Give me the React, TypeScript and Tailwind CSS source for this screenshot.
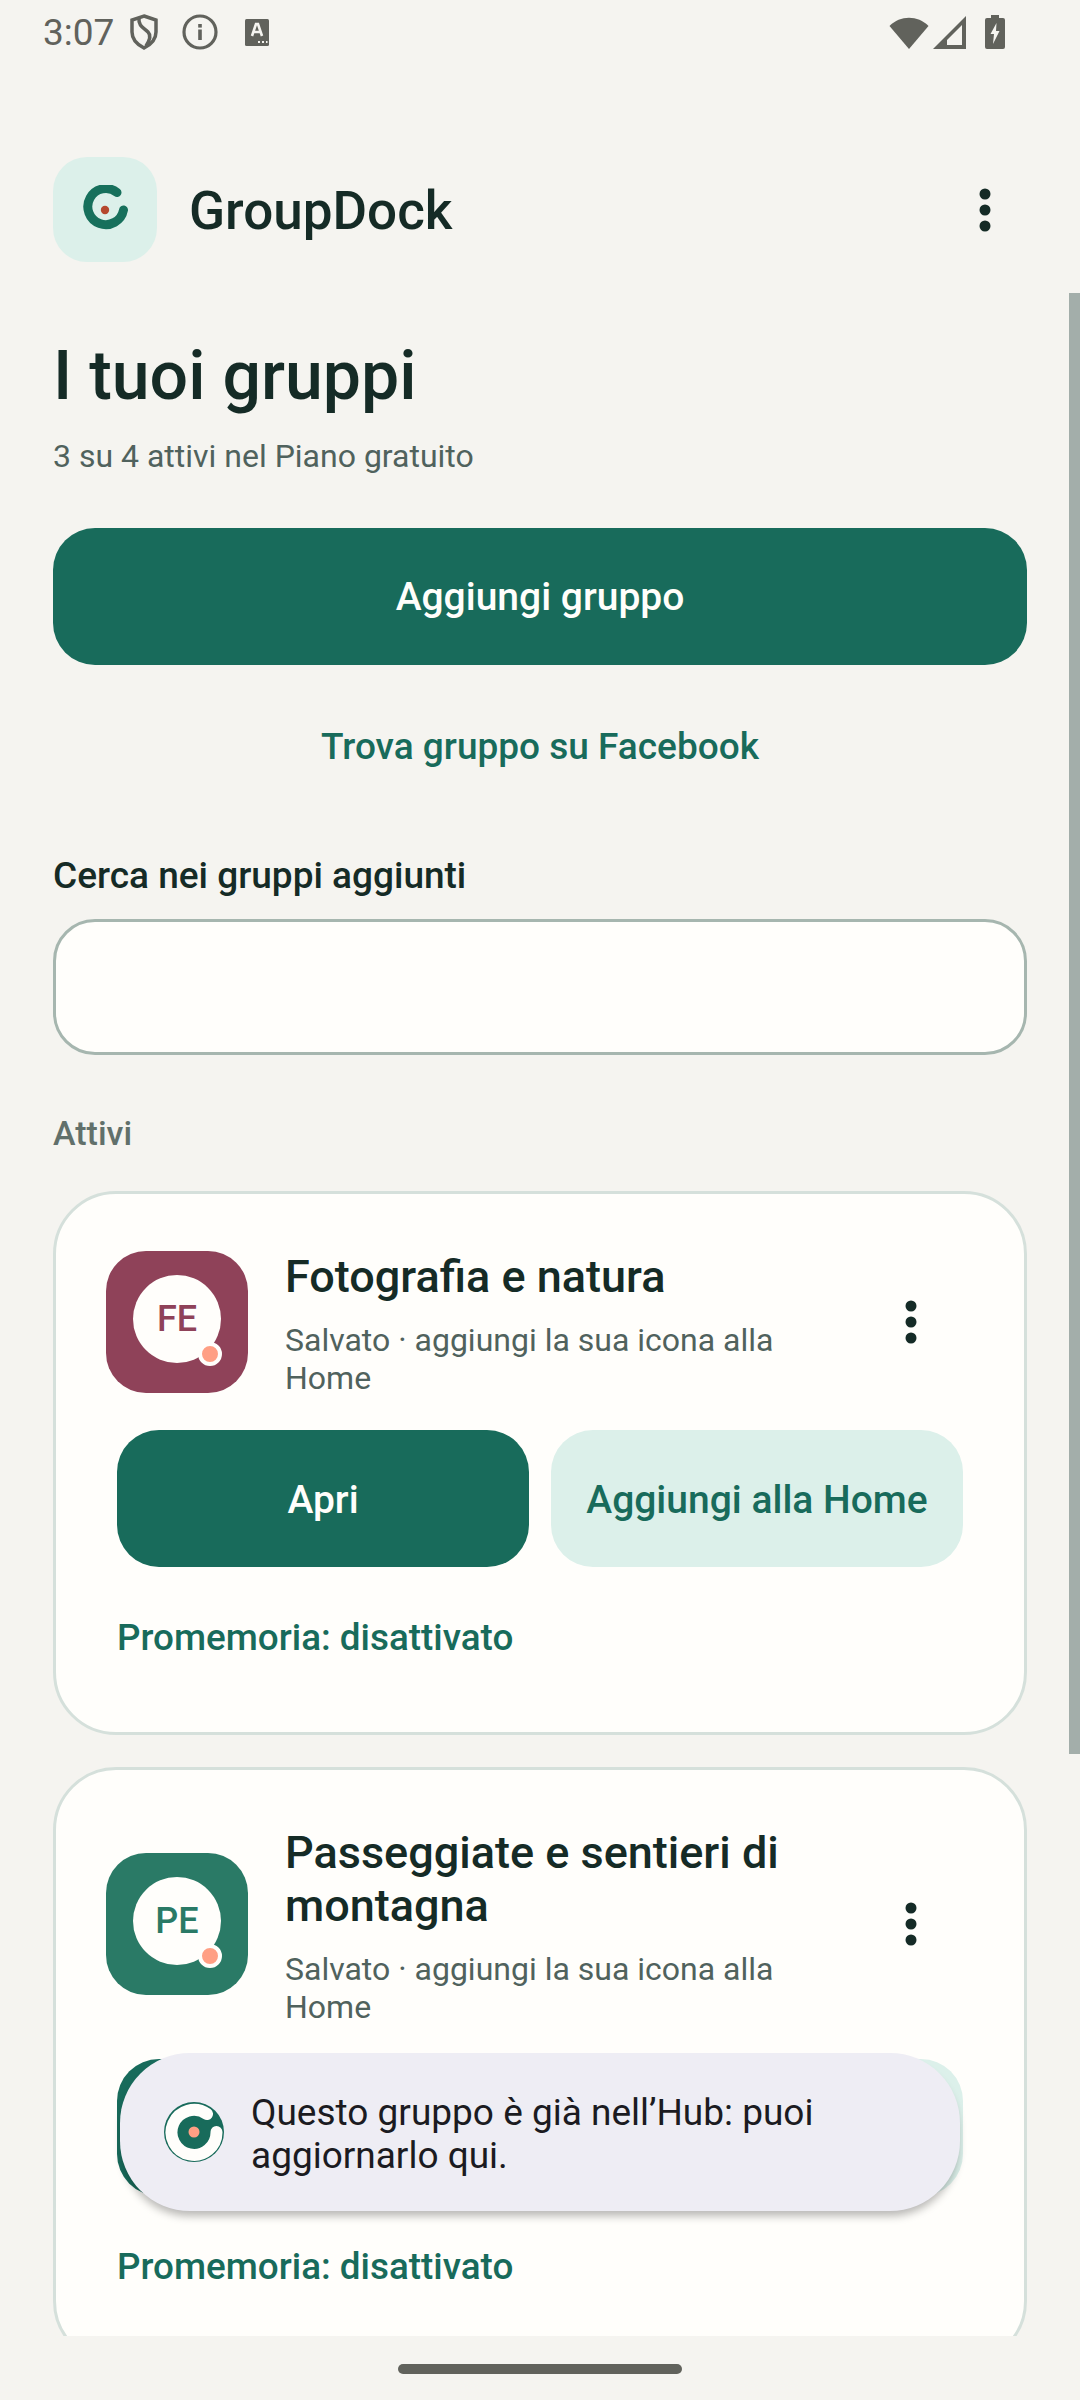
import React from 'react';

const Kebab = () => (
  <svg width="12" height="44" viewBox="0 0 12 44" className="shrink-0">
    <circle cx="6" cy="6" r="5.5" fill="#152b26" />
    <circle cx="6" cy="22" r="5.5" fill="#152b26" />
    <circle cx="6" cy="38" r="5.5" fill="#152b26" />
  </svg>
);

const StatusBar = () => (
  <div className="h-[64px] pl-[43px] pr-[75px] flex items-center justify-between text-[#61625c]">
    <div className="flex items-center">
      <span className="text-[37px] leading-[37px] w-[83px] font-normal">3:07</span>
      <svg width="28" height="36" viewBox="0 0 28 36" fill="none" stroke="#61625c" strokeWidth="3.5" className="ml-[4px]">
        <path d="M14 2 L26 6 V18 C26 26 20 31 14 34 C8 31 2 26 2 18 V6 Z" />
        <path d="M9 4 C8 12 14 14 18 18 C21 21 20 26 16 32" />
      </svg>
      <svg width="36" height="36" viewBox="0 0 36 36" className="ml-[24px]">
        <circle cx="18" cy="18" r="16" fill="none" stroke="#61625c" strokeWidth="3.2" />
        <rect x="16.2" y="15.5" width="3.6" height="10.5" fill="#61625c" />
        <rect x="16.2" y="10" width="3.6" height="3.6" fill="#61625c" />
      </svg>
      <svg width="24" height="27" viewBox="0 0 24 27" className="ml-[27px]">
        <rect width="24" height="27" rx="1.5" fill="#61625c" />
        <path d="M7 17 L11 5 H13 L17 17 M8.5 13 H15.5" fill="none" stroke="#f5f4f0" strokeWidth="2.6" />
        <path d="M13 23 h2 M17 23 h2 M21 23 h1.5" stroke="#f5f4f0" strokeWidth="2" />
      </svg>
    </div>
    <div className="flex items-center">
      <svg width="40" height="33" viewBox="0 0 40 33">
        <path d="M0.5 10 C11 -1 29 -1 39.5 10 L20 33 Z" fill="#61625c" />
      </svg>
      <svg width="33" height="33" viewBox="0 0 33 33" className="ml-[4px]">
        <path fillRule="evenodd" d="M33 0 V33 H0 Z M29 9 L14 24 V29 H29 Z" fill="#61625c" />
      </svg>
      <svg width="20" height="34" viewBox="0 0 20 34" className="ml-[19px]">
        <path d="M6 0 H14 V3 H18 A2 2 0 0 1 20 5 V32 A2 2 0 0 1 18 34 H2 A2 2 0 0 1 0 32 V5 A2 2 0 0 1 2 3 H6 Z" fill="#61625c" />
        <path d="M11.5 8 L5.5 19 H9 L8 29 L14.5 16 H11 Z" fill="#f5f4f0" />
      </svg>
    </div>
  </div>
);

const AppBar = () => (
  <div className="h-[229px] pt-[93px] pl-[53px] pr-[89px] flex items-start justify-between">
    <div className="flex items-center gap-[32px]">
      <div className="w-[104px] h-[105px] rounded-[34px] bg-[#dcf0ea] flex items-center justify-center">
        <svg width="48" height="50" viewBox="0 0 48 50" fill="none">
          <path d="M36 7.5 A18 18 0 1 0 42.5 25" stroke="#17705c" strokeWidth="9" strokeLinecap="round" />
          <circle cx="24" cy="25" r="4.2" fill="#b5482e" />
        </svg>
      </div>
      <span className="mt-[2px] text-[#152b26] text-[53px] leading-[60px] font-medium">GroupDock</span>
    </div>
    <div className="pt-[31px]">
      <Kebab />
    </div>
  </div>
);

interface GroupCardProps {
  title: string;
  initials: string;
  color: string;
  textColor: string;
}

const GroupCard: React.FC<GroupCardProps> = ({ title, initials, color, textColor }) => (
  <div className="bg-[#fffefb] border-[3px] border-[#d5e0db] rounded-[63px] pt-[52px] pb-[72px] pl-[50px] pr-[38px]">
    <div className="flex items-center">
      <div className={`relative w-[142px] h-[142px] rounded-[40px] shrink-0 ${color}`}>
        <div className={`absolute left-[27px] top-[24px] w-[88px] h-[88px] rounded-full bg-[#fffefb] flex items-center justify-center text-[36px] font-medium ${textColor}`}>
          {initials}
        </div>
        <div className="absolute left-[92px] top-[91px] w-[24px] h-[24px] rounded-full bg-[#ff9f84] border-[4.5px] border-[#fffefb]" />
      </div>
      <div className="ml-[37px] w-[520px] pt-[4px]">
        <div className="text-[#152b26] text-[45px] leading-[53px] font-medium">{title}</div>
        <div className="text-[#50625d] text-[32px] leading-[38px] mt-[18px]">Salvato · aggiungi la sua icona alla Home</div>
      </div>
      <div className="ml-auto mr-[69px]">
        <Kebab />
      </div>
    </div>
    <div className="flex gap-[22px] ml-[11px] mt-[33px]">
      <div className="w-[412px] h-[137px] pt-[3px] rounded-[42px] bg-[#186b5b] text-[#fffefb] flex items-center justify-center text-[39px] font-medium">Apri</div>
      <div className="w-[412px] h-[137px] pt-[3px] rounded-[42px] bg-[#dcf0ea] text-[#186b5b] flex items-center justify-center text-[39px] font-medium">Aggiungi alla Home</div>
    </div>
    <div className="ml-[11px] mt-[49px] text-[#186b5b] text-[36.85px] leading-[44px] font-medium">Promemoria: disattivato</div>
  </div>
);

const Toast = () => (
  <div className="absolute left-[120px] top-[2053px] w-[840px] h-[158px] rounded-[70px] bg-[#eeedf4] shadow-[0_7px_8px_-2px_rgba(0,0,0,0.28)] flex items-center pl-[43px]">
    <svg width="62" height="62" viewBox="0 0 62 62" className="shrink-0">
      <circle cx="31" cy="31" r="30" fill="#186b5b" />
      <path d="M44 13 A22.5 22.5 0 1 0 53.5 31" fill="none" stroke="#fffefb" strokeWidth="12" strokeLinecap="round" />
      <circle cx="31" cy="31" r="5.5" fill="#ff9f84" />
    </svg>
    <div className="ml-[26px] pt-[3px] text-[#1b1b21] text-[37px] leading-[43px]">
      Questo gruppo è già nell’Hub: puoi<br />aggiornarlo qui.
    </div>
  </div>
);

export default function App() {
  return (
    <div className="relative w-[1080px] h-[2400px] bg-[#f5f4f0] overflow-hidden font-['Roboto',sans-serif]">
      <StatusBar />
      <AppBar />
      <div className="relative h-[2043px] overflow-hidden px-[53px]">
        <div className="absolute right-0 top-0 w-[11px] h-[1461px] bg-[#a3aeaa]" />
        <h1 className="mt-[43px] text-[#152b26] text-[68px] leading-[80px] font-medium">I tuoi gruppi</h1>
        <p className="mt-[22px] text-[#50625d] text-[32px] leading-[36px]">3 su 4 attivi nel Piano gratuito</p>
        <div className="mt-[54px] h-[137px] pt-[2px] rounded-[42px] bg-[#186b5b] text-[#fffefb] flex items-center justify-center text-[39px] font-medium">Aggiungi gruppo</div>
        <div className="mt-[60px] text-center text-[#186b5b] text-[37px] leading-[44px] font-medium">Trova gruppo su Facebook</div>
        <div className="mt-[85px] text-[#152b26] text-[37px] leading-[44px] font-medium">Cerca nei gruppi aggiunti</div>
        <div className="mt-[21px] h-[136px] rounded-[42px] bg-[#fffefb] border-[3px] border-[#a6b6af]" />
        <div className="mt-[58px] text-[#61706b] text-[34px] leading-[40px] font-medium">Attivi</div>
        <div className="mt-[38px] flex flex-col gap-[32px]">
          <GroupCard title="Fotografia e natura" initials="FE" color="bg-[#8f4259]" textColor="text-[#8f4259]" />
          <GroupCard title="Passeggiate e sentieri di montagna" initials="PE" color="bg-[#2a7a66]" textColor="text-[#2a7a66]" />
        </div>
      </div>
      <Toast />
      <div className="absolute left-[398px] top-[2364px] w-[284px] h-[10px] rounded-full bg-[#61625c]" />
    </div>
  );
}
